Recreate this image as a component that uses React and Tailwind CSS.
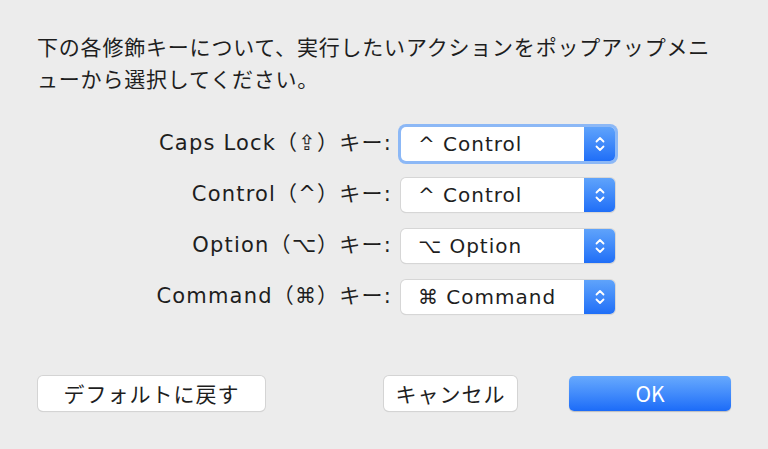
const rows = [
  { label: "Caps Lock（⇪）キー:", value: "^ Control", focused: true },
  { label: "Control（^）キー:", value: "^ Control" },
  { label: "Option（⌥）キー:", value: "⌥ Option" },
  { label: "Command（⌘）キー:", value: "⌘ Command" },
];

const Stepper = () => (
  <div className="w-[31px] h-full flex items-center justify-center rounded-r-[5px] bg-gradient-to-b from-[#5fa3fb] to-[#1f6ef7]">
    <svg width="12" height="20" viewBox="0 0 12 20" fill="none">
      <path d="M2.5 7.5 L6 4 L9.5 7.5" stroke="white" strokeWidth="1.8" strokeLinecap="round" strokeLinejoin="round" />
      <path d="M2.5 12.5 L6 16 L9.5 12.5" stroke="white" strokeWidth="1.8" strokeLinecap="round" strokeLinejoin="round" />
    </svg>
  </div>
);

const Select = ({ value, focused }) => (
  <div
    className={
      focused
        ? "h-[34px] w-[214px] flex items-stretch rounded-[5px] bg-white shadow-[0_0_0_3px_#8cb8f6]"
        : "h-[34px] w-[214px] flex items-stretch rounded-[5px] bg-white shadow-[0_0_0_1px_#d6d6d6,0_1px_1px_rgba(0,0,0,0.15)]"
    }
  >
    <div className="flex-1 flex items-center pl-[17px] text-[20px] tracking-[1px] text-[#1e1e1e]">{value}</div>
    <Stepper />
  </div>
);

export default function App() {
  return (
    <div
      className="w-[768px] h-[449px] bg-[#ececec] pt-[30px] px-[37px] text-[#1e1e1e]"
      style={{ fontFamily: '"DejaVu Sans", "Noto Sans CJK JP", sans-serif' }}
    >
      <p className="text-[21px] leading-[32px] tracking-[0.8px]" style={{ fontFamily: '"Noto Sans CJK JP", sans-serif' }}>
        下の各修飾キーについて、実行したいアクションをポップアップメニューから選択してください。
      </p>

      <div className="mt-[33px] flex flex-col gap-[17px]">
        {rows.map((row) => (
          <div key={row.label} className="flex items-center">
            <div className="w-[355px] text-right text-[21px] tracking-[1.2px]">{row.label}</div>
            <div className="ml-[9px]">
              <Select value={row.value} focused={row.focused} />
            </div>
          </div>
        ))}
      </div>

      <div className="mt-[62px] flex items-center" style={{ fontFamily: '"Noto Sans CJK JP", sans-serif' }}>
        <button className="ml-[1px] w-[227px] h-[35px] rounded-[5px] bg-white text-[21px] tracking-[1px] shadow-[0_0_0_1px_#d4d4d4,0_1px_1px_rgba(0,0,0,0.15)]">
          デフォルトに戻す
        </button>
        <button className="ml-auto w-[133px] h-[35px] rounded-[5px] bg-white text-[21px] tracking-[1px] shadow-[0_0_0_1px_#d4d4d4,0_1px_1px_rgba(0,0,0,0.15)]">
          キャンセル
        </button>
        <button className="ml-[52px] w-[162px] h-[35px] rounded-[5px] bg-gradient-to-b from-[#67a9fd] to-[#1b6bf8] text-white text-[21px] shadow-[0_1px_1px_rgba(0,0,0,0.2)]">
          OK
        </button>
      </div>
    </div>
  );
}
